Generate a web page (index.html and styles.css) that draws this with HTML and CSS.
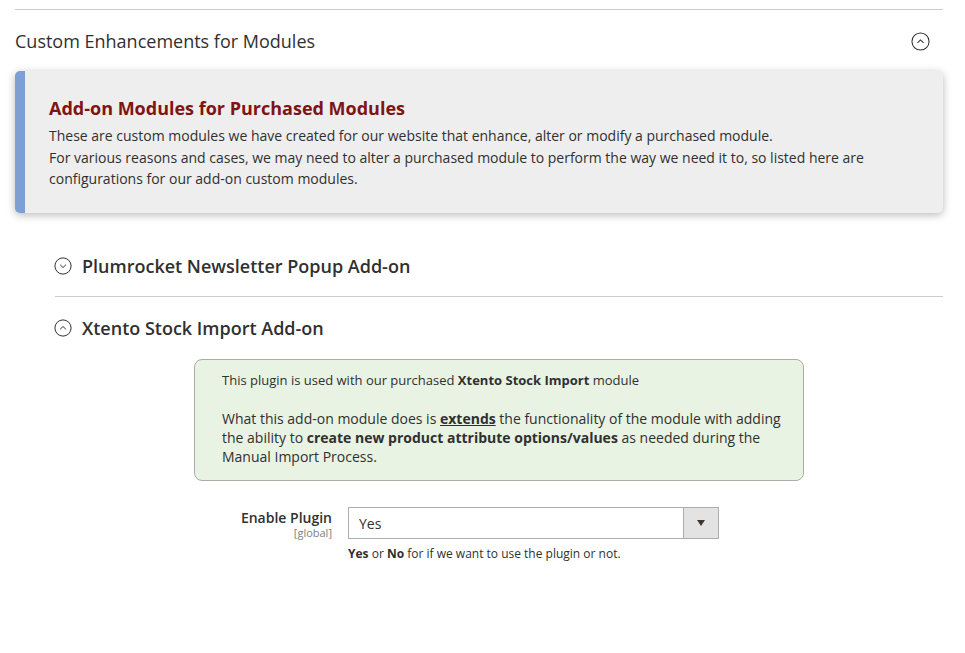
FILE: index.html
```html
<!DOCTYPE html>
<html>
<head>
<meta charset="utf-8">
<link rel="stylesheet" href="styles.css">
</head>
<body>
<div class="page">
  <div class="section">
    <div class="section-head">
      <span class="section-title">Custom Enhancements for Modules</span>
      <svg class="ico ico-lg" viewBox="0 0 20 20"><circle cx="10" cy="10" r="9" /><path d="M6.8 11.4 L10 8.3 L13.2 11.4" /></svg>
    </div>
    <div class="info-box">
      <h2 class="info-title">Add-on Modules for Purchased Modules</h2>
      <p class="info-text">These are custom modules we have created for our website that enhance, alter or modify a purchased module.<br>For various reasons and cases, we may need to alter a purchased module to perform the way we need it to, so listed here are configurations for our add-on custom modules.</p>
    </div>
    <div class="groups">
      <div class="group">
        <div class="group-head">
          <svg class="ico" viewBox="0 0 20 20"><circle cx="10" cy="10" r="9" /><path d="M6.8 8.6 L10 11.7 L13.2 8.6" /></svg>
          <span class="group-title">Plumrocket Newsletter Popup Add-on</span>
        </div>
      </div>
      <div class="group group-open">
        <div class="group-head">
          <svg class="ico" viewBox="0 0 20 20"><circle cx="10" cy="10" r="9" /><path d="M6.8 11.4 L10 8.3 L13.2 11.4" /></svg>
          <span class="group-title">Xtento Stock Import Add-on</span>
        </div>
        <div class="note-box">
          <div class="note-lead">This plugin is used with our purchased <b>Xtento Stock Import</b> module</div>
          <div class="note-body">What this add-on module does is <b><u>extends</u></b> the functionality of the module with adding the ability to <b>create new product attribute options/values</b> as needed during the Manual Import Process.</div>
        </div>
        <div class="field">
          <div class="field-label">
            <span class="label-text">Enable Plugin</span>
            <span class="scope">[global]</span>
          </div>
          <div class="field-control">
            <div class="select">
              <span class="select-value">Yes</span>
              <span class="select-btn"><span class="arrow"></span></span>
            </div>
            <div class="field-note"><b>Yes</b> or <b>No</b> for if we want to use the plugin or not.</div>
          </div>
        </div>
      </div>
    </div>
  </div>
</div>
</body>
</html>
```

FILE: styles.css
```css
* { box-sizing: border-box; }
html, body { margin: 0; padding: 0; background: #fff; }
body {
  font-family: "Open Sans", "Liberation Sans", sans-serif;
  color: #303030;
  width: 965px;
  height: 653px;
  overflow: hidden;
}
.page { padding: 9px 22px 0 15px; }
.section { border-top: 1px solid #cccccc; }
.section-head {
  display: flex;
  align-items: center;
  justify-content: space-between;
  padding: 19px 13px 18px 0;
  height: 61px;
}
.section-title { font-size: 18px; line-height: 24px; color: #303030; }
.ico { width: 18px; height: 18px; fill: none; stroke: #303030; stroke-width: 1.1; flex: none; }
.ico-lg { width: 19px; height: 19px; }
.info-box {
  background: #eeeeee;
  border-left: 10px solid #7d9fd3;
  border-radius: 5px;
  box-shadow: 0 2px 8px rgba(0,0,0,0.28);
  padding: 25px 24px 22px 24px;
  height: 142px;
}
.info-title {
  margin: 0;
  font-size: 18px;
  line-height: 24px;
  font-weight: 700;
  color: #7f1414;
}
.info-text {
  margin: 5px 0 0 0;
  font-size: 14px;
  line-height: 21.5px;
  color: #303030;
}
.groups { padding-left: 40px; padding-top: 38px; }
.group-head {
  display: flex;
  align-items: center;
  gap: 10px;
  height: 30px;
}
.group-head .ico { margin-left: -1px; }
.group-title { font-size: 18px; font-weight: 600; line-height: 24px; color: #303030; }
.group { border-bottom: 1px solid #cccccc; padding-bottom: 15px; }
.group-open { border-bottom: none; padding-top: 16px; }
.note-box {
  margin: 16px 0 0 139px;
  width: 610px;
  background: #e8f3e3;
  border: 1px solid #a9ada6;
  border-radius: 8px;
  padding: 11px 20px 14px 27px;
  font-size: 14px;
  line-height: 19px;
  color: #303030;
}
.note-lead { font-size: 13px; }
.note-body { margin-top: 19px; }
.field {
  display: flex;
  margin-top: 26px;
  margin-left: 140px;
}
.field-label {
  width: 137px;
  display: flex;
  flex-direction: column;
  align-items: flex-end;
  padding-top: 2px;
}
.label-text { font-size: 14px; font-weight: 600; line-height: 18px; color: #303030; }
.scope { font-size: 11px; line-height: 12px; color: #808080; }
.field-control { margin-left: 16px; }
.select {
  width: 371px;
  height: 32px;
  border: 1px solid #adadad;
  display: flex;
  align-items: center;
  justify-content: space-between;
  background: #fff;
}
.select-value { font-size: 14px; padding-left: 10px; color: #303030; }
.select-btn {
  width: 35px;
  height: 100%;
  background: #e3e3e3;
  border-left: 1px solid #adadad;
  display: flex;
  align-items: center;
  justify-content: center;
}
.arrow {
  width: 0; height: 0;
  border-left: 4.5px solid transparent;
  border-right: 4.5px solid transparent;
  border-top: 6px solid #41362f;
}
.field-note { font-size: 12px; line-height: 16px; margin-top: 7px; color: #303030; }
```
